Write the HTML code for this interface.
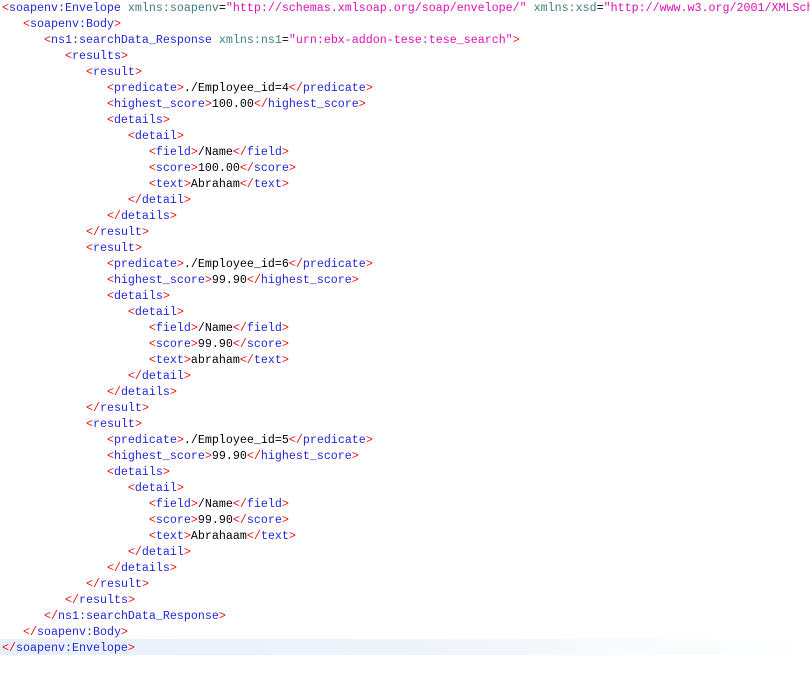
<!DOCTYPE html>
<html><head><meta charset="utf-8"><style>
html,body{margin:0;padding:0;background:#fff;width:810px;height:675px;overflow:hidden}
#c{position:absolute;left:2px;top:0;font-family:"Liberation Mono","Courier New",monospace;font-size:11.67px;line-height:16px;color:#000}
.l{height:16px;white-space:pre}
.b{color:#f01010}.t{color:#2626d9}.a{color:#3f8080}.v{color:#e010b8}
#hl{position:absolute;left:0;top:639px;width:810px;height:16px;background:linear-gradient(to right,#e8f0fc 0,#eef4fc 400px,#fff 810px)}
</style></head><body>
<div id="hl"></div>
<div id="c">
<div class="l"><span class="b">&lt;</span><span class="t">soapenv:Envelope</span> <span class="a">xmlns:soapenv</span>=<span class="v">"http://schemas.xmlsoap.org/soap/envelope/"</span> <span class="a">xmlns:xsd</span>=<span class="v">"http://www.w3.org/2001/XMLSchema"</span></div>
<div class="l">   <span class="b">&lt;</span><span class="t">soapenv:Body</span><span class="b">&gt;</span></div>
<div class="l">      <span class="b">&lt;</span><span class="t">ns1:searchData_Response</span> <span class="a">xmlns:ns1</span>=<span class="v">"urn:ebx-addon-tese:tese_search"</span><span class="b">&gt;</span></div>
<div class="l">         <span class="b">&lt;</span><span class="t">results</span><span class="b">&gt;</span></div>
<div class="l">            <span class="b">&lt;</span><span class="t">result</span><span class="b">&gt;</span></div>
<div class="l">               <span class="b">&lt;</span><span class="t">predicate</span><span class="b">&gt;</span>./Employee_id=4<span class="b">&lt;/</span><span class="t">predicate</span><span class="b">&gt;</span></div>
<div class="l">               <span class="b">&lt;</span><span class="t">highest_score</span><span class="b">&gt;</span>100.00<span class="b">&lt;/</span><span class="t">highest_score</span><span class="b">&gt;</span></div>
<div class="l">               <span class="b">&lt;</span><span class="t">details</span><span class="b">&gt;</span></div>
<div class="l">                  <span class="b">&lt;</span><span class="t">detail</span><span class="b">&gt;</span></div>
<div class="l">                     <span class="b">&lt;</span><span class="t">field</span><span class="b">&gt;</span>/Name<span class="b">&lt;/</span><span class="t">field</span><span class="b">&gt;</span></div>
<div class="l">                     <span class="b">&lt;</span><span class="t">score</span><span class="b">&gt;</span>100.00<span class="b">&lt;/</span><span class="t">score</span><span class="b">&gt;</span></div>
<div class="l">                     <span class="b">&lt;</span><span class="t">text</span><span class="b">&gt;</span>Abraham<span class="b">&lt;/</span><span class="t">text</span><span class="b">&gt;</span></div>
<div class="l">                  <span class="b">&lt;/</span><span class="t">detail</span><span class="b">&gt;</span></div>
<div class="l">               <span class="b">&lt;/</span><span class="t">details</span><span class="b">&gt;</span></div>
<div class="l">            <span class="b">&lt;/</span><span class="t">result</span><span class="b">&gt;</span></div>
<div class="l">            <span class="b">&lt;</span><span class="t">result</span><span class="b">&gt;</span></div>
<div class="l">               <span class="b">&lt;</span><span class="t">predicate</span><span class="b">&gt;</span>./Employee_id=6<span class="b">&lt;/</span><span class="t">predicate</span><span class="b">&gt;</span></div>
<div class="l">               <span class="b">&lt;</span><span class="t">highest_score</span><span class="b">&gt;</span>99.90<span class="b">&lt;/</span><span class="t">highest_score</span><span class="b">&gt;</span></div>
<div class="l">               <span class="b">&lt;</span><span class="t">details</span><span class="b">&gt;</span></div>
<div class="l">                  <span class="b">&lt;</span><span class="t">detail</span><span class="b">&gt;</span></div>
<div class="l">                     <span class="b">&lt;</span><span class="t">field</span><span class="b">&gt;</span>/Name<span class="b">&lt;/</span><span class="t">field</span><span class="b">&gt;</span></div>
<div class="l">                     <span class="b">&lt;</span><span class="t">score</span><span class="b">&gt;</span>99.90<span class="b">&lt;/</span><span class="t">score</span><span class="b">&gt;</span></div>
<div class="l">                     <span class="b">&lt;</span><span class="t">text</span><span class="b">&gt;</span>abraham<span class="b">&lt;/</span><span class="t">text</span><span class="b">&gt;</span></div>
<div class="l">                  <span class="b">&lt;/</span><span class="t">detail</span><span class="b">&gt;</span></div>
<div class="l">               <span class="b">&lt;/</span><span class="t">details</span><span class="b">&gt;</span></div>
<div class="l">            <span class="b">&lt;/</span><span class="t">result</span><span class="b">&gt;</span></div>
<div class="l">            <span class="b">&lt;</span><span class="t">result</span><span class="b">&gt;</span></div>
<div class="l">               <span class="b">&lt;</span><span class="t">predicate</span><span class="b">&gt;</span>./Employee_id=5<span class="b">&lt;/</span><span class="t">predicate</span><span class="b">&gt;</span></div>
<div class="l">               <span class="b">&lt;</span><span class="t">highest_score</span><span class="b">&gt;</span>99.90<span class="b">&lt;/</span><span class="t">highest_score</span><span class="b">&gt;</span></div>
<div class="l">               <span class="b">&lt;</span><span class="t">details</span><span class="b">&gt;</span></div>
<div class="l">                  <span class="b">&lt;</span><span class="t">detail</span><span class="b">&gt;</span></div>
<div class="l">                     <span class="b">&lt;</span><span class="t">field</span><span class="b">&gt;</span>/Name<span class="b">&lt;/</span><span class="t">field</span><span class="b">&gt;</span></div>
<div class="l">                     <span class="b">&lt;</span><span class="t">score</span><span class="b">&gt;</span>99.90<span class="b">&lt;/</span><span class="t">score</span><span class="b">&gt;</span></div>
<div class="l">                     <span class="b">&lt;</span><span class="t">text</span><span class="b">&gt;</span>Abrahaam<span class="b">&lt;/</span><span class="t">text</span><span class="b">&gt;</span></div>
<div class="l">                  <span class="b">&lt;/</span><span class="t">detail</span><span class="b">&gt;</span></div>
<div class="l">               <span class="b">&lt;/</span><span class="t">details</span><span class="b">&gt;</span></div>
<div class="l">            <span class="b">&lt;/</span><span class="t">result</span><span class="b">&gt;</span></div>
<div class="l">         <span class="b">&lt;/</span><span class="t">results</span><span class="b">&gt;</span></div>
<div class="l">      <span class="b">&lt;/</span><span class="t">ns1:searchData_Response</span><span class="b">&gt;</span></div>
<div class="l">   <span class="b">&lt;/</span><span class="t">soapenv:Body</span><span class="b">&gt;</span></div>
<div class="l"><span class="b">&lt;/</span><span class="t">soapenv:Envelope</span><span class="b">&gt;</span></div>
</div>
</body></html>
